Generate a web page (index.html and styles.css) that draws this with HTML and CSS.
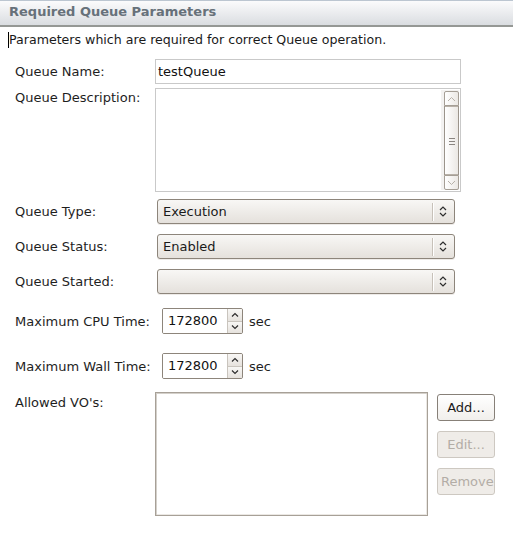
FILE: index.html
```html
<!DOCTYPE html>
<html>
<head>
<meta charset="utf-8">
<link rel="stylesheet" href="styles.css">
</head>
<body>
<div class="page">
  <div class="header"><span class="title">Required Queue Parameters</span></div>
  <div class="desc"><span class="caret"></span>Parameters which are required for correct Queue operation.</div>

  <div class="form">
    <div class="row row-name">
      <div class="lbl">Queue Name:</div>
      <div class="entry">testQueue</div>
    </div>

    <div class="row row-desc">
      <div class="lbl lbl-top">Queue Description:</div>
      <div class="textarea">
        <div class="vscroll">
          <div class="sb-btn sb-up">
            <svg width="9" height="6" viewBox="0 0 9 6"><path d="M1 5 L4.5 1.5 L8 5" fill="none" stroke="#b7b1a9" stroke-width="1"/></svg>
          </div>
          <div class="sb-thumb">
            <svg width="6" height="8" viewBox="0 0 6 8"><path d="M0 1.5 H6 M0 4.5 H6 M0 7.5 H6" stroke="#8a8580" stroke-width="1"/></svg>
          </div>
          <div class="sb-btn sb-down">
            <svg width="9" height="6" viewBox="0 0 9 6"><path d="M1 1 L4.5 4.5 L8 1" fill="none" stroke="#b7b1a9" stroke-width="1"/></svg>
          </div>
        </div>
      </div>
    </div>

    <div class="row row-combo first-combo">
      <div class="lbl">Queue Type:</div>
      <div class="combo">
        <span class="combo-text">Execution</span>
        <span class="combo-sep"></span>
        <svg class="combo-arrow" width="8" height="11" viewBox="0 0 8 11"><path d="M1 4 L4 1 L7 4 M1 7 L4 10 L7 7" fill="none" stroke="#2e2e2e" stroke-width="1.2"/></svg>
      </div>
    </div>

    <div class="row row-combo">
      <div class="lbl">Queue Status:</div>
      <div class="combo">
        <span class="combo-text">Enabled</span>
        <span class="combo-sep"></span>
        <svg class="combo-arrow" width="8" height="11" viewBox="0 0 8 11"><path d="M1 4 L4 1 L7 4 M1 7 L4 10 L7 7" fill="none" stroke="#2e2e2e" stroke-width="1.2"/></svg>
      </div>
    </div>

    <div class="row row-combo">
      <div class="lbl">Queue Started:</div>
      <div class="combo">
        <span class="combo-text"></span>
        <span class="combo-sep"></span>
        <svg class="combo-arrow" width="8" height="11" viewBox="0 0 8 11"><path d="M1 4 L4 1 L7 4 M1 7 L4 10 L7 7" fill="none" stroke="#2e2e2e" stroke-width="1.2"/></svg>
      </div>
    </div>

    <div class="row row-spin first-spin">
      <div class="lbl lbl-spin">Maximum CPU Time:</div>
      <div class="spin">
        <div class="spin-text">172800</div>
        <div class="spin-btns">
          <div class="spin-btn spin-up"><svg width="8" height="5" viewBox="0 0 8 5"><path d="M1 4.5 L4 1.5 L7 4.5" fill="none" stroke="#2e2e2e" stroke-width="1.2"/></svg></div>
          <div class="spin-btn spin-down"><svg width="8" height="5" viewBox="0 0 8 5"><path d="M1 0.5 L4 3.5 L7 0.5" fill="none" stroke="#2e2e2e" stroke-width="1.2"/></svg></div>
        </div>
      </div>
      <div class="unit">sec</div>
    </div>

    <div class="row row-spin second-spin">
      <div class="lbl lbl-spin">Maximum Wall Time:</div>
      <div class="spin">
        <div class="spin-text">172800</div>
        <div class="spin-btns">
          <div class="spin-btn spin-up"><svg width="8" height="5" viewBox="0 0 8 5"><path d="M1 4.5 L4 1.5 L7 4.5" fill="none" stroke="#2e2e2e" stroke-width="1.2"/></svg></div>
          <div class="spin-btn spin-down"><svg width="8" height="5" viewBox="0 0 8 5"><path d="M1 0.5 L4 3.5 L7 0.5" fill="none" stroke="#2e2e2e" stroke-width="1.2"/></svg></div>
        </div>
      </div>
      <div class="unit">sec</div>
    </div>

    <div class="row row-vo">
      <div class="lbl lbl-vo">Allowed VO's:</div>
      <div class="vo-list"></div>
      <div class="vo-buttons">
        <div class="btn">Add...</div>
        <div class="btn btn-disabled">Edit...</div>
        <div class="btn btn-disabled btn-left">Remove</div>
      </div>
    </div>
  </div>
</div>
</body>
</html>
```

FILE: styles.css
```css
* { box-sizing: border-box; }

html, body {
  margin: 0;
  padding: 0;
  background: #ffffff;
}

body {
  font-family: "DejaVu Sans", sans-serif;
  font-size: 13px;
  color: #1e1e1e;
}

.page {
  width: 513px;
  height: 557px;
  overflow: hidden;
}

.header {
  height: 27px;
  border-top: 1px solid #bcc6d1;
  border-bottom: 2px solid #959895;
  background: linear-gradient(#fbfbfc, #dadde1);
  padding-left: 9px;
  padding-bottom: 3px;
  display: flex;
  align-items: center;
}

.title {
  font-weight: bold;
  font-size: 13px;
  color: #67717a;
}

.desc {
  margin-top: 4px;
  height: 18px;
  line-height: 18px;
  padding-left: 9px;
  position: relative;
  font-size: 12.6px;
  color: #1a1a1a;
}

.caret {
  position: absolute;
  left: 8px;
  top: 1px;
  width: 1px;
  height: 16px;
  background: #000;
}

.form {
  padding-top: 10px;
  padding-left: 15px;
}

.row {
  display: flex;
  align-items: center;
}

.lbl {
  width: 140px;
  flex: none;
  color: #1e1e1e;
}

.lbl-top {
  align-self: flex-start;
  padding-top: 2px;
}

.entry {
  width: 306px;
  height: 25px;
  border: 1px solid #c9c9c9;
  padding-left: 2px;
  line-height: 23px;
  color: #111;
}

.row-desc {
  margin-top: 4px;
  align-items: flex-start;
}

.textarea {
  width: 306px;
  height: 104px;
  border: 1px solid #c9c9c9;
  display: flex;
  justify-content: flex-end;
  padding: 1px 1px 1px 0;
}

.vscroll {
  width: 18px;
  background: #f3f2f1;
  display: flex;
  flex-direction: column;
  align-items: flex-end;
  padding: 1px 0 0 0;
}

.sb-btn, .sb-thumb {
  width: 15px;
  border: 1px solid #a59e95;
  background: linear-gradient(90deg, #ffffff, #ebe8e4);
  display: flex;
  align-items: center;
  justify-content: center;
}

.sb-up {
  height: 15px;
  border-radius: 2px 2px 0 0;
}

.sb-thumb {
  flex: 1;
  border-top: none;
  border-bottom: none;
  border-left-color: #9b948b;
  border-right-color: #9b948b;
  box-shadow: inset 0 1px 0 #b8b1a8, inset 0 -1px 0 #b8b1a8;
}

.sb-down {
  height: 15px;
  border-radius: 0 0 2px 2px;
}

.row-combo {
  margin-top: 10px;
}

.first-combo {
  margin-top: 7px;
}

.combo {
  width: 298px;
  height: 25px;
  margin-left: 2px;
  border: 1px solid #8d857b;
  border-radius: 3px;
  background: linear-gradient(#f8f7f5, #e5e1dc);
  box-shadow: 0 1px 0 #eeebe8;
  display: flex;
  align-items: center;
  padding-left: 5px;
}

.combo-text {
  flex: 1;
  color: #1a1a1a;
}

.combo-sep {
  width: 2px;
  height: 18px;
  border-left: 1px solid #c7c1b9;
  border-right: 1px solid #ffffff;
}

.combo-arrow {
  margin: 0 7px 0 5px;
}

.row-spin {
  margin-top: 14px;
}

.first-spin {
  margin-top: 14px;
}

.second-spin {
  margin-top: 19px;
}

.lbl-spin {
  width: 147px;
}

.spin {
  width: 81px;
  height: 26px;
  border: 1px solid #8d857b;
  border-radius: 2px;
  display: flex;
  overflow: hidden;
}

.spin-text {
  flex: 1;
  background: #fff;
  padding-left: 5px;
  line-height: 24px;
  color: #111;
  border-right: 1px solid #c9c4bd;
}

.spin-btns {
  width: 14px;
  display: flex;
  flex-direction: column;
}

.spin-btn {
  flex: 1;
  background: linear-gradient(#f8f7f5, #e6e2dd);
  display: flex;
  align-items: center;
  justify-content: center;
}

.spin-up {
  border-bottom: 1px solid #c9c4bd;
}

.unit {
  margin-left: 6px;
}

.row-vo {
  margin-top: 13px;
  align-items: flex-start;
}

.lbl-vo {
  padding-top: 3px;
}

.vo-list {
  width: 273px;
  height: 124px;
  border: 1px solid #a7a097;
  box-shadow: inset 1px 1px 0 #d4d0ca, inset -1px -1px 0 #ebe8e4;
}

.vo-buttons {
  margin-left: 9px;
  margin-top: 2px;
  display: flex;
  flex-direction: column;
  gap: 10px;
}

.btn {
  width: 58px;
  height: 27px;
  border: 1px solid #878078;
  border-radius: 3px;
  background: linear-gradient(#ffffff, #f1efec);
  display: flex;
  align-items: center;
  justify-content: center;
  color: #1a1a1a;
  overflow: hidden;
  white-space: nowrap;
}

.btn-disabled {
  border-color: #cdc8c1;
  background: #efece8;
  color: #b3ada6;
}

.btn-left {
  justify-content: flex-start;
  padding-left: 3px;
}
```
